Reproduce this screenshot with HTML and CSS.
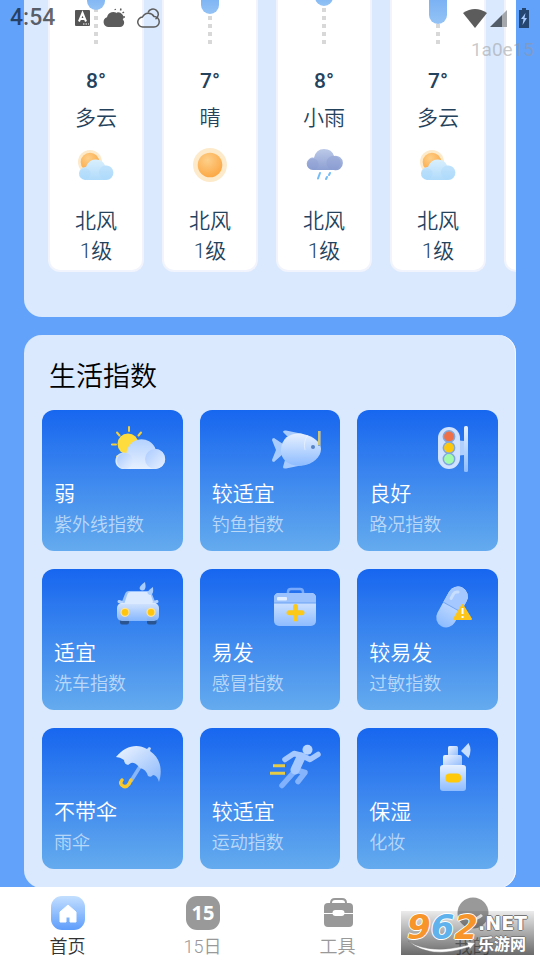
FILE: index.html
```html
<!DOCTYPE html>
<html lang="zh-CN">
<head>
    <meta charset="utf-8">
    <meta name="viewport" content="width=device-width, initial-scale=1">
    <title>生活指数</title>
    <link rel="stylesheet" href="styles.css">
</head>
<body>
    <!-- shared gradients and weather icons -->
    <svg class="defs" width="0" height="0" aria-hidden="true">
        <defs>
            <linearGradient id="ice" x1="0" y1="0" x2="0" y2="1"><stop offset="0" stop-color="#e6f0ff"/><stop offset="1" stop-color="#8ebcff"/></linearGradient>
            <linearGradient id="iceSide" x1="0" y1="0" x2="1" y2="1"><stop offset="0" stop-color="#f0f6ff"/><stop offset="1" stop-color="#8bb8fc"/></linearGradient>
            <linearGradient id="cloud" x1="0" y1="0" x2="0" y2="1"><stop offset="0" stop-color="#b4d2ff"/><stop offset="1" stop-color="#e6f0ff"/></linearGradient>
            <linearGradient id="puff" x1="0" y1="0" x2="1" y2="1"><stop offset="0" stop-color="#a9caff"/><stop offset="1" stop-color="#e8f1ff"/></linearGradient>
            <linearGradient id="skyCloud" x1="0" y1="0" x2="0" y2="1"><stop offset="0" stop-color="#d9effd"/><stop offset="1" stop-color="#b0dbfb"/></linearGradient>
            <linearGradient id="rainCloud" x1="0" y1="0" x2="0" y2="1"><stop offset="0" stop-color="#bcc9e8"/><stop offset="1" stop-color="#8c9fd2"/></linearGradient>
            <radialGradient id="sun" cx=".4" cy=".3" r=".8"><stop offset="0" stop-color="#fdd08a"/><stop offset="1" stop-color="#fca33c"/></radialGradient>
            <linearGradient id="home" x1="0" y1="0" x2="0" y2="1"><stop offset="0" stop-color="#c3dfff"/><stop offset="1" stop-color="#5e9dfb"/></linearGradient>
            <symbol id="cloudy" viewBox="0 0 40 40">
                <circle cx="14" cy="17" r="12" fill="#fdeacb"/>
                <circle cx="14" cy="17" r="9.300" fill="url(#sun)"/>
                <path d="M9 35a6.500 6.500 0 1 1 1-13Q13 14 20 14.500 27 15 29 20.500a7.300 7.300 0 1 1 1 14.500z" fill="url(#skyCloud)"/>
                <circle cx="30" cy="27.500" r="7" fill="#a6d8fb" opacity=".35"/>
                <circle cx="9" cy="28.700" r="5.500" fill="#a6d8fb" opacity=".35"/>
            </symbol>
            <symbol id="sunny" viewBox="0 0 40 40">
                <circle cx="20" cy="20" r="17" fill="#fdeacb"/>
                <circle cx="20" cy="20" r="12.300" fill="url(#sun)"/>
            </symbol>
            <symbol id="rainy" viewBox="0 0 40 40">
                <path d="M9 25a6.200 6.200 0 1 1 1-12.300Q12 4 20 4t10 7a7.200 7.200 0 1 1 0 14z" fill="url(#rainCloud)"/>
                <circle cx="29.500" cy="17.700" r="7" fill="#8799d0" opacity=".35"/>
                <circle cx="9" cy="19" r="5.500" fill="#8799d0" opacity=".3"/>
                <path d="M16 28l-2 5.500M26 28l-1 2M23 32l-1 2" stroke="#72bdf7" stroke-width="2" stroke-linecap="round"/>
            </symbol>
        </defs>
    </svg>

    <header class="status-bar">
        <span class="clock">4:54</span>
        <svg width="16" height="18" viewBox="0 0 16 18"><rect y="1" width="15" height="16" rx="1" fill="#555"/><path d="M4 12.500L7.500 4l3.500 8.500M5.500 10h4" fill="none" stroke="#fff" stroke-width="2"/><path d="M8 15h6" stroke="#fff" stroke-dasharray="1.500 1"/></svg>
        <svg width="22" height="20" viewBox="0 0 22 20"><path d="M5 19a5 5 0 0 1-1-9.700A6.500 6.500 0 0 1 15 6a6 6 0 0 1 4 5A4.300 4.300 0 0 1 17 19z" fill="#5c5c5c"/><path d="M14 5.500a4.300 4.300 0 0 1 5 6" fill="#5c5c5c" stroke="#5c5c5c" stroke-width="2"/><path d="M12 1l.5 1M18 .5l-.5 2M21 4l-1.500 1M20 9h2" stroke="#5c5c5c" stroke-width="1.500"/></svg>
        <svg width="23" height="20" viewBox="0 0 23 20" fill="none" stroke="#5c5c5c" stroke-width="1.500"><path d="M6 19a5 5 0 0 1-.5-10A6.500 6.500 0 0 1 17 8.500 5 5 0 0 1 17 19z"/><path d="M11 4.500a5.300 5.300 0 1 1 7.500 6.500"/></svg>
        <span class="spacer"></span>
        <svg class="wifi" width="24" height="19" viewBox="0 0 24 19"><path d="M12 19L0 4Q12-4 24 4z" fill="#5c5c5c"/></svg>
        <svg class="signal" width="18" height="18" viewBox="0 0 18 18"><path d="M0 18L12 6v12z" fill="#515c68"/><path d="M12 6l5-5v17h-5z" fill="#a4a7ab"/></svg>
        <svg class="battery" width="12" height="20" viewBox="0 0 12 20"><path d="M1 2h3V0h4v2h3v18H1z" fill="#254671"/><path d="M7.500 5L3 11h2.500l-1 6L9 10H6.500z" fill="#a8cbff"/></svg>
    </header>
    <div class="device-id">1a0e15</div>

    <main>
        <section class="panel forecast">
            <article class="day">
                <div class="track"><div class="bar" style="height: 22px"></div></div>
                <div class="temp">8°</div>
                <div class="sky">多云</div>
                <svg class="sky-icon"><use href="#cloudy"/></svg>
                <div class="wind">北风<br>1级</div>
            </article>
            <article class="day">
                <div class="track"><div class="bar" style="height: 26px"></div></div>
                <div class="temp">7°</div>
                <div class="sky">晴</div>
                <svg class="sky-icon"><use href="#sunny"/></svg>
                <div class="wind">北风<br>1级</div>
            </article>
            <article class="day">
                <div class="track"><div class="bar" style="height: 18px"></div></div>
                <div class="temp">8°</div>
                <div class="sky">小雨</div>
                <svg class="sky-icon"><use href="#rainy"/></svg>
                <div class="wind">北风<br>1级</div>
            </article>
            <article class="day">
                <div class="track"><div class="bar" style="height: 36px"></div></div>
                <div class="temp">7°</div>
                <div class="sky">多云</div>
                <svg class="sky-icon"><use href="#cloudy"/></svg>
                <div class="wind">北风<br>1级</div>
            </article>
            <article class="day"></article>
        </section>

        <section class="panel life">
            <h2>生活指数</h2>
            <div class="grid">
                <article class="tile">
                    <svg class="tile-icon" viewBox="0 0 60 54">
                        <circle cx="20" cy="20" r="10.500" fill="#ffdc3d"/>
                        <path d="M21 3v4M9 8.500l2.500 3M33 8.500l-2.500 3M4 20.500h4M9 32.500l3-1" stroke="#f5cf3a" stroke-width="2" stroke-linecap="round"/>
                        <path d="M17 45a8.300 8.300 0 1 1 1.500-16A15 15 0 0 1 47.500 25a10 10 0 0 1-.5 20z" fill="url(#cloud)"/>
                        <circle cx="47" cy="35" r="10" fill="url(#puff)"/>
                        <circle cx="17" cy="37" r="8" fill="url(#puff)"/>
                    </svg>
                    <h3>弱</h3>
                    <p>紫外线指数</p>
                </article>
                <article class="tile">
                    <svg class="tile-icon" viewBox="0 0 60 54">
                        <path d="M18 8q0-2 3-1.500L38 10 24 14zM20 36l-2 7q0 2 3 1.500L38 41zM18 20L9 14q-2 0-2 2l4 10-4 10q0 2 2 2l9-8z" fill="#a9ccff"/>
                        <path d="M16 25C17 13 27 8 38 10c10 2 18 8 18 15 0 8-8 15-18 16.500C26 43 15 37 16 25z" fill="url(#ice)"/>
                        <path d="M43 11q-5 6-3 15" fill="none" stroke="#f2f7ff" opacity=".6"/>
                        <path d="M54.500 7v15" stroke="#86a5ca" stroke-width="3"/>
                        <path d="M54 7v14" stroke="#e8cf50" stroke-width="1.500"/>
                        <circle cx="48" cy="23" r="2" fill="#5684c4"/>
                    </svg>
                    <h3>较适宜</h3>
                    <p>钓鱼指数</p>
                </article>
                <article class="tile">
                    <svg class="tile-icon" viewBox="0 0 60 54">
                        <path d="M35 16q3 1 7 1v14q-4 0-7 1z" fill="#b0cffc"/>
                        <rect x="41" y="2" width="4" height="46" rx="1.500" fill="url(#ice)"/>
                        <rect x="15" y="3" width="22" height="42" rx="11" fill="#d0e2ff"/>
                        <g stroke="#7fa8df" stroke-width="1.500"><circle cx="26" cy="12.500" r="5.700" fill="#ee7048"/><circle cx="26" cy="23.700" r="5.700" fill="#fcc70f"/><circle cx="26" cy="35" r="5.700" fill="#a1fbaa"/></g>
                    </svg>
                    <h3>良好</h3>
                    <p>路况指数</p>
                </article>
                <article class="tile">
                    <svg class="tile-icon" viewBox="0 0 60 54">
                        <rect x="12" y="34" width="9" height="7.500" rx="2" fill="#2a5490"/><rect x="39" y="34" width="9.500" height="7.500" rx="2" fill="#2a5490"/>
                        <path d="M13 21l4-10q1-3 4-3h19q3 0 4 3l4 10z" fill="#9bc3ff"/>
                        <path d="M16.500 20l3-9q.5-2 3-2h16q3 0 4 2l3 9z" fill="#dceaff"/>
                        <path d="M11 18.500l3 1M49 18.500l-3 1" fill="none" stroke="#b4d2ff" stroke-width="3" stroke-linecap="round"/>
                        <rect x="9" y="20" width="42" height="18" rx="5" fill="url(#ice)" opacity=".9"/>
                        <circle cx="17" cy="29.300" r="4" fill="#ffc50f" stroke="#fbe39b" stroke-width="1.200"/><circle cx="43" cy="29.300" r="4" fill="#ffc50f" stroke="#fbe39b" stroke-width="1.200"/>
                        <path d="M37-1q2 9-3 8.500-6-2 3-8.500zM45 4q1 8-3 8-6-2 3-8z" fill="#a9cdff"/>
                    </svg>
                    <h3>适宜</h3>
                    <p>洗车指数</p>
                </article>
                <article class="tile">
                    <svg class="tile-icon" viewBox="0 0 60 54">
                        <path d="M23 12V9q0-3 3-3h9q3 0 3 3v3" fill="none" stroke="#79aafc" stroke-width="2.500"/>
                        <rect x="9" y="10" width="42" height="33" rx="5" fill="url(#ice)"/>
                        <path d="M9 20v-5q0-5 5-5h32q5 0 5 5v5z" fill="#9bc2fd"/>
                        <path d="M9 20h42" stroke="#6da2f5"/>
                        <rect x="12" y="14" width="10" height="3.500" rx="1" fill="#e4efff"/>
                        <path d="M30.500 23.500v12.500M24 29.700h13" stroke="#fdc918" stroke-width="5" stroke-linecap="round"/>
                    </svg>
                    <h3>易发</h3>
                    <p>感冒指数</p>
                </article>
                <article class="tile">
                    <svg class="tile-icon" viewBox="0 0 60 54">
                        <g transform="rotate(29 29 24)"><rect x="19" y="2" width="20" height="44" rx="10" fill="url(#ice)"/><path d="M19 24V12a10 10 0 0 1 20 0v12z" fill="#a4c8ff"/><path d="M19 24h20" stroke="#73a5f5"/><path d="M24 17v-5q0-3 3-4" fill="none" stroke="#c8deff" stroke-width="3" stroke-linecap="round"/></g>
                        <path d="M39.500 22l8.500 14H31z" fill="#fcc51c" stroke="#fcc51c" stroke-width="2" stroke-linejoin="round"/>
                        <path d="M39.500 25v6M39.500 33v2" stroke="#fff" stroke-width="2"/>
                    </svg>
                    <h3>较易发</h3>
                    <p>过敏指数</p>
                </article>
                <article class="tile">
                    <svg class="tile-icon" viewBox="0 0 60 54">
                        <path d="M33 23L23 39" stroke="#8ab7fa" stroke-width="3.500"/>
                        <path d="M23 38l-2 4q-3 4-6 2-4-2-1-6" fill="none" stroke="#f9c82a" stroke-width="3.500" stroke-linecap="round"/>
                        <path d="M8 15C17 4 29 1 39 7l2-2 2 1-1 3c10 7 13 18 9 31q-2-7-6-7-2 3-5 1-2-7-8-8-5-6-9-5l-3 2q-4-1-4-5-4-3-8-3z" fill="url(#iceSide)"/>
                    </svg>
                    <h3>不带伞</h3>
                    <p>雨伞</p>
                </article>
                <article class="tile">
                    <svg class="tile-icon" viewBox="0 0 60 54">
                        <g fill="none" stroke-linecap="round" stroke-linejoin="round" stroke="#a6c9ff" stroke-width="5.500">
                            <path d="M29 30L17 43.500" stroke="#82b1fd"/><path d="M31 28l9 2.500-7 9" stroke="#86b4fc"/><path d="M36 15l-6 13" stroke-width="9"/><path d="M20 17.500l9-6 8 2 8 4 8-5"/>
                        </g>
                        <circle cx="42.500" cy="7.700" r="5" fill="#b8d5ff"/>
                        <path d="M8 23.700h12M5 31.300h15" stroke="#e6cc46" stroke-width="3"/>
                    </svg>
                    <h3>较适宜</h3>
                    <p>运动指数</p>
                </article>
                <article class="tile">
                    <svg class="tile-icon" viewBox="0 0 60 54">
                        <rect x="25" y="4" width="10" height="11" rx="1.500" fill="url(#iceSide)"/>
                        <rect x="20" y="13" width="19" height="12" rx="2" fill="url(#iceSide)"/>
                        <rect x="17" y="23" width="26" height="26" rx="3" fill="url(#ice)"/>
                        <rect x="22.500" y="31.500" width="15.500" height="9" rx="4" fill="#fec90b"/>
                        <path d="M38 9l7.500-8q4 7 0 15z" fill="#c9dfff"/>
                    </svg>
                    <h3>保湿</h3>
                    <p>化妆</p>
                </article>
            </div>
        </section>
    </main>

    <nav class="tabs">
        <a class="tab active" href="#home">
            <svg viewBox="0 0 36 36"><rect x="1" y="1" width="34" height="34" rx="11" fill="url(#home)"/><path d="M18 10l8 7v10h-6v-5h-4v5h-6V17z" fill="#fff" stroke="#fff" stroke-linejoin="round"/></svg>
            首页
        </a>
        <a class="tab" href="#days">
            <svg viewBox="0 0 36 36"><rect x="1" y="1" width="34" height="34" rx="11" fill="#999"/><text x="18" y="25" text-anchor="middle" class="date">15</text></svg>
            15日
        </a>
        <a class="tab" href="#tools">
            <svg viewBox="0 0 36 36"><path d="M11 10V8q0-4 4-4h7q4 0 4 4v2" fill="none" stroke="#999" stroke-width="2"/><rect x="4" y="8" width="29" height="24" rx="4" fill="#999"/><path d="M4 18.500h29" stroke="#fff"/><rect x="12.500" y="15" width="12" height="6" rx="3" fill="#fff"/></svg>
            工具
        </a>
        <a class="tab" href="#me">
            <svg viewBox="0 0 36 36"><circle cx="18" cy="18" r="15.500" fill="#999"/><path d="M9 20q9 8 18 0" fill="none" stroke="#fff" stroke-width="3"/></svg>
            我的
        </a>
    </nav>

    <div class="watermark">
        <svg class="swoosh" viewBox="0 0 70 14"><path d="M1 1q22 14 60 4l-1-3 8 1-5 6-1-2Q23 20 1 1z" fill="#fff" stroke="#777" stroke-width=".5"/></svg>
        <span class="digits"><b>9</b><b class="blue">6</b><b>2</b></span>
        <span class="site"><span class="net">.NET</span><span class="cn">乐游网</span></span>
    </div>
</body>
</html>
```

FILE: styles.css
```css
* { box-sizing: border-box; }
body {
    display: flex;
    flex-direction: column;
    height: 100vh;
    margin: 0;
    overflow: hidden;
    background: #62a2fb;
    font-family: Roboto, "Noto Sans CJK SC", sans-serif;
}
h2, h3, p { margin: 0; font-weight: 350; }
.defs { position: absolute; }

/* system bar floats over the scrolled page */
.status-bar {
    position: absolute;
    top: 0;
    left: 0;
    right: 0;
    z-index: 2;
    display: flex;
    align-items: center;
    height: 36px;
    padding: 0 10px;
}
.status-bar svg { margin-right: 12px; }
.clock { width: 65px; font-size: 23px; font-weight: 500; line-height: 36px; color: rgba(0, 0, 0, .62); }
.spacer { flex: 1; }
.status-bar .wifi { margin-right: 3px; }
.status-bar .signal { margin-right: 10px; }
.status-bar .battery { margin-right: 0; }
.device-id {
    position: absolute;
    top: 38px;
    right: 6px;
    z-index: 2;
    font-size: 19px;
    line-height: 24px;
    color: rgba(150, 150, 150, .5);
}

main { flex: 1; min-height: 0; padding: 0 24px; overflow: hidden; }
.panel { background: #dae9fe; border-radius: 18px; }

.forecast {
    display: flex;
    gap: 18px;
    margin-bottom: 18px;
    padding: 0 0 45px 24px;
    border-top-left-radius: 0;
    border-top-right-radius: 0;
    overflow: hidden;
}
.day {
    flex: none;
    width: 96px;
    padding-bottom: 4px;
    border: 2px solid #f1f4fc;
    border-top: 0;
    border-radius: 0 0 12px 12px;
    background: #fff;
    color: #25425c;
    font-size: 21px;
    line-height: 30px;
    text-align: center;
}
.track {
    height: 44px;
    margin-bottom: 22px;
    overflow: hidden;
    background: repeating-linear-gradient(to top, #d8d8d8 0 4px, transparent 4px 8px) center / 4px 100% no-repeat;
}
.bar {
    width: 18px;
    margin: -12px auto 0;
    border-radius: 9px;
    background: linear-gradient(#6faaf4, #94c3f5);
}
.temp { margin-bottom: 7px; font-weight: 500; }
.sky, .wind { font-weight: 350; }
.sky-icon { display: block; width: 40px; height: 40px; margin: 12px auto 21px; }

.life { padding: 22px 18px 19px; box-shadow: inset -1px 0 #f6faff; }
.life h2 { padding-left: 7px; margin-bottom: 13px; font-size: 27px; line-height: 40px; }
.grid { display: grid; grid-template-columns: repeat(3, 1fr); gap: 18px 17px; }
.tile {
    padding: 14px 12px 12px;
    border-radius: 12px;
    background: linear-gradient(#1766ef, #64abee);
    color: #fff;
}
.tile-icon { display: block; width: 60px; height: 54px; margin: 0 3px 0 auto; overflow: visible; }
.tile h3 { font-size: 21px; line-height: 32px; }
.tile p { font-size: 18px; line-height: 29px; color: rgba(255, 255, 255, .6); }

.tabs { flex: none; display: flex; padding: 8px 0 0; background: #fff; }
.tab {
    flex: 1;
    display: flex;
    flex-direction: column;
    align-items: center;
    gap: 2px;
    font-size: 18px;
    font-weight: 350;
    line-height: 28px;
    color: #999;
    text-decoration: none;
}
.tab svg { width: 36px; height: 36px; }
.tab.active { color: #333; }
.date { font: 700 20px "Noto Sans", sans-serif; fill: #fff; }

.watermark {
    position: absolute;
    right: 6px;
    bottom: 6px;
    display: flex;
    width: 133px;
    height: 44px;
    padding-left: 6px;
    background: linear-gradient(rgba(0, 0, 0, .08), rgba(0, 0, 0, .58));
    font-family: "DejaVu Sans", "Noto Sans CJK SC", sans-serif;
    font-weight: 700;
    white-space: nowrap;
}
.digits {
    font-size: 34px;
    font-style: italic;
    line-height: 33px;
    color: #f7942a;
    text-shadow: 1px 0 #fff, -1px 0 #fff, 0 1px #fff, 0 -1px #fff;
}
.digits .blue { color: #5fb2ec; }
.swoosh { position: absolute; left: 6px; bottom: 1px; width: 70px; height: 14px; }
.site { display: flex; flex-direction: column; color: #fff; text-shadow: 1px 0 #777, -1px 0 #777, 0 1px #777, 0 -1px #777; }
.net { font-size: 19px; line-height: 25px; }
.cn { font-size: 16px; line-height: 18px; }
```
